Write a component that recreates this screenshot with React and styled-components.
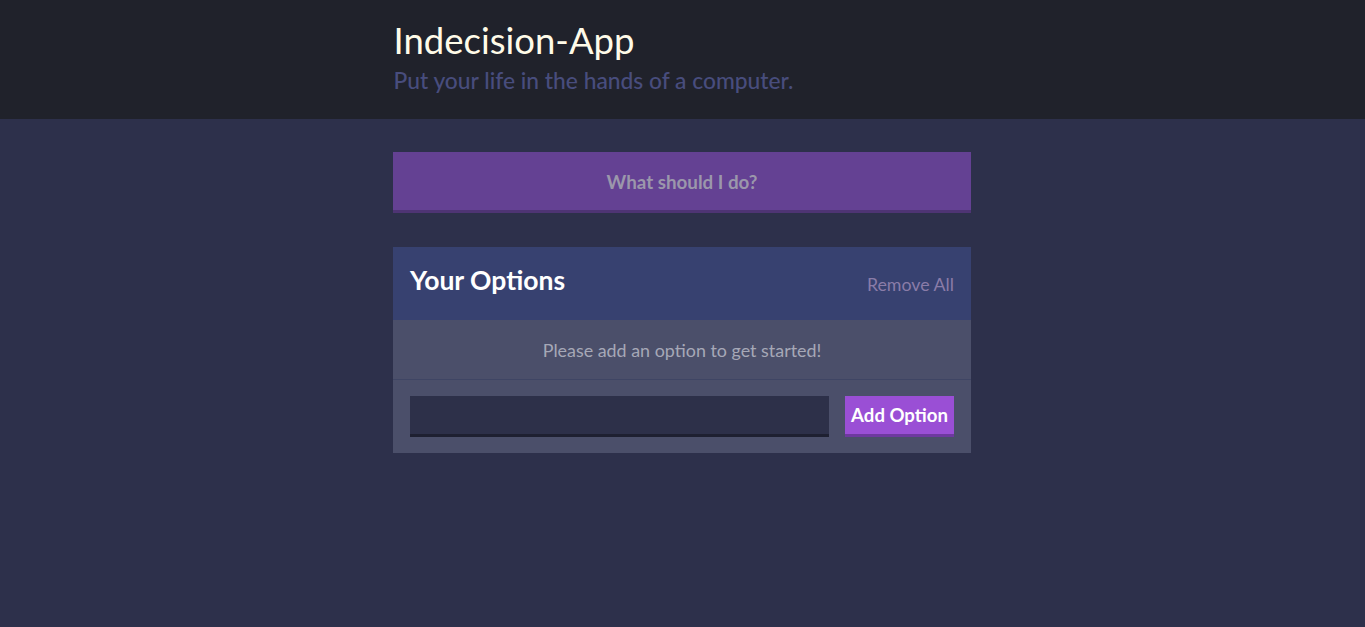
import React from "react";
import styled, { createGlobalStyle } from "styled-components";

const GlobalStyle = createGlobalStyle`
  html, body {
    margin: 0;
    padding: 0;
    background: #2d304b;
    font-family: Lato, "Open Sans", sans-serif;
  }
  body {
    padding-right: 1px;
  }
  * {
    box-sizing: border-box;
  }
`;

const Header = styled.header`
  background: #20222b;
  height: 119px;
  margin-right: -1px;
`;

const Container = styled.div`
  width: 578px;
  margin: 0 auto;
`;

const HeaderInner = styled(Container)`
  padding-top: 18px;
`;

const Title = styled.h1`
  margin: 0;
  color: #fffbe8;
  font-size: 36.5px;
  font-weight: 400;
  line-height: 44px;
`;

const Subtitle = styled.h2`
  margin: 4px 0 0;
  color: #484d7d;
  font-size: 22.8px;
  font-weight: 500;
  line-height: 28px;
`;

const Main = styled(Container)`
  padding-top: 33px;
`;

const BigButton = styled.button`
  display: block;
  width: 100%;
  height: 61px;
  border: none;
  border-bottom: 3px solid #4e3474;
  background: #644193;
  color: #9b97ab;
  font-family: inherit;
  font-size: 18.8px;
  font-weight: 700;
  margin-bottom: 34px;
`;

const Widget = styled.section`
  background: #4b4f6a;
`;

const WidgetHeader = styled.div`
  display: flex;
  align-items: center;
  justify-content: space-between;
  height: 73px;
  padding: 0 17px;
  background: #374170;
`;

const WidgetTitle = styled.h3`
  margin: 0;
  color: #ffffff;
  font-size: 26.5px;
  font-weight: 700;
  margin-top: -7px;
`;

const LinkButton = styled.button`
  border: none;
  background: none;
  padding: 0;
  color: #8a7ca8;
  font-family: inherit;
  font-size: 17.8px;
  margin-top: 1px;
`;

const Message = styled.p`
  margin: 0;
  height: 60px;
  display: flex;
  align-items: center;
  justify-content: center;
  color: #a6a8b7;
  font-size: 17.9px;
  border-bottom: 1px solid #3f4564;
`;

const Form = styled.form`
  display: flex;
  align-items: center;
  gap: 16px;
  padding: 16px 17px;
`;

const Input = styled.input`
  flex: 1;
  height: 41px;
  border: none;
  border-bottom: 3px solid #1e2031;
  background: #2d3049;
  color: #fff;
  font-family: inherit;
  font-size: 17px;
  padding: 0 10px;
  outline: none;
`;

const AddButton = styled.button`
  height: 41px;
  width: 109px;
  border: none;
  border-bottom: 3px solid #6e399f;
  background: #9a4fd5;
  color: #ffffff;
  font-family: inherit;
  font-size: 18.6px;
  font-weight: 700;
  padding: 0;
`;

export default function App() {
  return (
    <>
      <GlobalStyle />
      <Header>
        <HeaderInner>
          <Title>Indecision-App</Title>
          <Subtitle>Put your life in the hands of a computer.</Subtitle>
        </HeaderInner>
      </Header>
      <Main>
        <BigButton disabled>What should I do?</BigButton>
        <Widget>
          <WidgetHeader>
            <WidgetTitle>Your Options</WidgetTitle>
            <LinkButton>Remove All</LinkButton>
          </WidgetHeader>
          <Message>Please add an option to get started!</Message>
          <Form onSubmit={(e) => e.preventDefault()}>
            <Input type="text" name="option" />
            <AddButton>Add Option</AddButton>
          </Form>
        </Widget>
      </Main>
    </>
  );
}
